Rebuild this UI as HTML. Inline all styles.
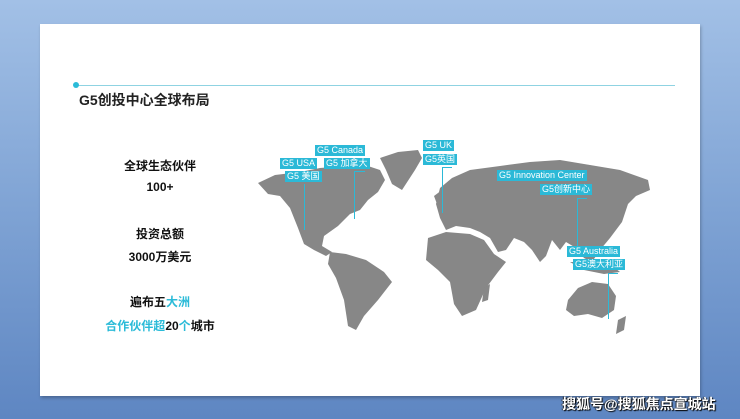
<!DOCTYPE html>
<html><head><meta charset="utf-8"><style>
body{margin:0;width:740px;height:419px;overflow:hidden;background:linear-gradient(180deg,#a2c0e6 0%,#7fa3d4 50%,#5e86c2 100%);font-family:"Liberation Sans","Noto Sans CJK SC",sans-serif;position:relative}
.slide{position:absolute;left:40px;top:24px;width:660px;height:372px;background:#fff;box-shadow:1px 2px 3px rgba(0,0,0,.25)}
.t{position:absolute;font-weight:bold;color:#111;font-size:12px;text-align:center;width:160px;left:80px}
.c{color:#2bbbd8}
.lb{position:absolute;background:#2bb9d7;color:#fff;font-size:9px;line-height:11px;padding:0 2px;white-space:nowrap}
.ln{position:absolute;background:#2bb9d7}
.wm{position:absolute;left:562px;top:394px;color:#fff;font-size:14px;font-weight:bold;text-shadow:1px 1px 1px #000,-1px 0 1px #333}
</style></head><body>
<div class="slide"></div>
<div style="position:absolute;left:76px;top:85px;width:599px;height:1px;background:#8fd3e2"></div>
<div style="position:absolute;left:73px;top:82px;width:6px;height:6px;border-radius:3px;background:#2bbbd8"></div>
<div style="position:absolute;left:79px;top:90px;font-size:14px;font-weight:bold;color:#222">G5创投中心全球布局</div>
<div class="t" style="top:157px">全球生态伙伴</div>
<div class="t" style="top:180px">100+</div>
<div class="t" style="top:225px">投资总额</div>
<div class="t" style="top:248px">3000万美元</div>
<div class="t" style="top:293px">遍布五<span class="c">大洲</span></div>
<div class="t" style="top:317px"><span class="c">合作伙伴超</span>20<span class="c">个</span>城市</div>
<svg style="position:absolute;left:0;top:0" width="740" height="419">
<g fill="#878787">
<polygon points="258,183 275,175 300,172 320,168 345,166 362,164 380,170 385,180 378,192 368,200 360,210 350,214 338,226 324,236 322,246 332,252 326,256 314,250 304,244 298,228 290,208 280,196 268,194"/>
<polygon points="380,158 398,152 418,150 422,158 415,170 402,190 392,184 386,170"/>
<polygon points="330,252 346,254 366,260 384,272 392,282 378,300 364,316 356,330 348,326 344,300 336,278 328,264"/>
<polygon points="436,204 440,188 452,178 470,170 500,166 530,162 560,160 590,165 620,170 648,180 650,190 636,196 628,204 622,222 610,238 600,250 592,262 584,258 576,248 566,242 560,250 552,240 546,256 540,262 532,250 524,242 514,238 506,250 498,252 490,238 480,232 470,228 456,226 446,230 440,218"/>
<polygon points="428,238 446,232 470,234 484,240 494,254 506,262 498,272 486,288 476,310 462,316 454,304 450,282 438,270 426,260"/>
<polygon points="568,300 578,288 592,282 608,284 616,296 614,310 602,318 588,314 574,316 566,310"/>
<polygon points="434,196 442,190 446,202 440,212"/>
<polygon points="570,262 592,262 610,264 620,272 604,274 584,270"/>
<polygon points="618,320 626,316 624,330 616,334"/>
<polygon points="484,288 490,284 488,300 482,302"/>
</g>
</svg>
<div class="ln" style="left:304px;top:184px;width:1px;height:46px"></div>
<div class="ln" style="left:354px;top:171px;width:1px;height:48px"></div>
<div class="ln" style="left:354px;top:171px;width:11px;height:1px"></div>
<div class="ln" style="left:442px;top:167px;width:1px;height:46px"></div>
<div class="ln" style="left:442px;top:167px;width:10px;height:1px"></div>
<div class="ln" style="left:577px;top:198px;width:1px;height:48px"></div>
<div class="ln" style="left:577px;top:198px;width:10px;height:1px"></div>
<div class="ln" style="left:608px;top:273px;width:1px;height:46px"></div>
<div class="ln" style="left:608px;top:273px;width:10px;height:1px"></div>
<div class="lb" style="left:315px;top:145px">G5 Canada</div>
<div class="lb" style="left:280px;top:158px">G5 USA</div>
<div class="lb" style="left:324px;top:158px">G5 加拿大</div>
<div class="lb" style="left:285px;top:171px">G5 美国</div>
<div class="lb" style="left:423px;top:140px">G5 UK</div>
<div class="lb" style="left:423px;top:154px">G5英国</div>
<div class="lb" style="left:497px;top:170px">G5 Innovation Center</div>
<div class="lb" style="left:540px;top:184px">G5创新中心</div>
<div class="lb" style="left:567px;top:246px">G5 Australia</div>
<div class="lb" style="left:573px;top:259px">G5澳大利亚</div>
<div class="wm">搜狐号@搜狐焦点宣城站</div>
</body></html>
